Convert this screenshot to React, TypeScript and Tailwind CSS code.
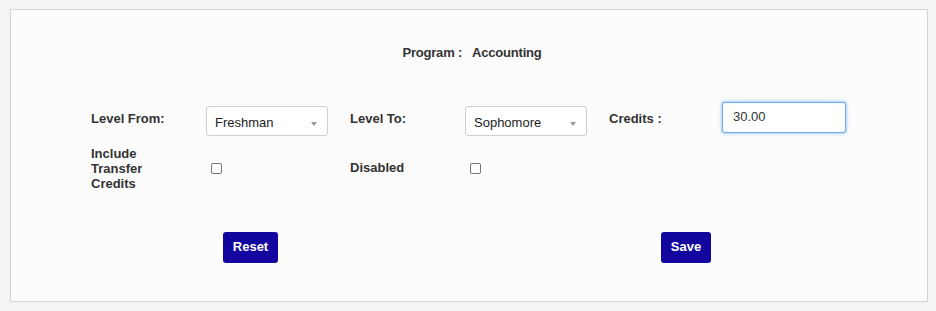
import React from "react";

function Select({ value }: { value: string }) {
  return (
    <div className="relative flex h-[30px] w-[122px] items-center rounded-[3px] border border-[#cfcfcf] bg-white pl-[8px] pt-[5px] text-[13px] text-[#222]">
      {value}
      <span className="absolute right-[10px] top-[15px] h-0 w-0 border-x-[3px] border-t-[4px] border-x-transparent border-t-[#999]" />
    </div>
  );
}

function Checkbox() {
  return <div className="h-[11px] w-[11px] rounded-[2px] border border-[#767676] bg-white" />;
}

export default function App() {
  return (
    <div
      className="h-[311px] w-[936px] bg-[#f4f4f4] pl-[10px] pt-[9px]"
      style={{ fontFamily: '"Liberation Sans", Arial, sans-serif' }}
    >
      <div className="h-[293px] w-[918px] border border-[#d4d4d4] bg-[#fcfcfc] text-[13px] text-[#333]">
        <div className="mt-[33px] flex justify-center pl-[6px] font-bold tracking-[-0.2px]">
          <span>Program :</span>
          <span className="ml-[10px]">Accounting</span>
        </div>

        <div className="mt-[39px] ml-[80px] grid grid-cols-[115px_144px_115px_144px_113px_124px] items-center">
          <div className="self-start pt-[7px] font-bold">Level From:</div>
          <div className="pt-[4px]">
            <Select value="Freshman" />
          </div>
          <div className="self-start pt-[7px] font-bold">Level To:</div>
          <div className="pt-[4px]">
            <Select value="Sophomore" />
          </div>
          <div className="self-start pt-[7px] font-bold">Credits :</div>
          <div className="self-start">
            <div className="flex h-[31px] w-[124px] items-center rounded-[3px] border border-[#6fa8ee] bg-white pl-[10px] text-[13px] text-[#333] shadow-[0_0_3px_1px_#a9cdf5]">
              30.00
            </div>
          </div>

          <div className="mt-[10px] font-bold leading-[15px]">
            Include
            <br />
            Transfer
            <br />
            Credits
          </div>
          <div className="mt-[10px] pl-[5px]">
            <Checkbox />
          </div>
          <div className="mt-[10px] self-start pt-[12px] font-bold">Disabled</div>
          <div className="mt-[10px] pl-[5px]">
            <Checkbox />
          </div>
          <div />
          <div />
        </div>

        <div className="mt-[41px] flex">
          <button className="ml-[212px] h-[31px] w-[55px] rounded-[3px] bg-[#12069e] text-[13px] font-bold text-white">
            Reset
          </button>
          <button className="ml-[383px] h-[31px] w-[50px] rounded-[3px] bg-[#12069e] text-[13px] font-bold text-white">
            Save
          </button>
        </div>
      </div>
    </div>
  );
}
